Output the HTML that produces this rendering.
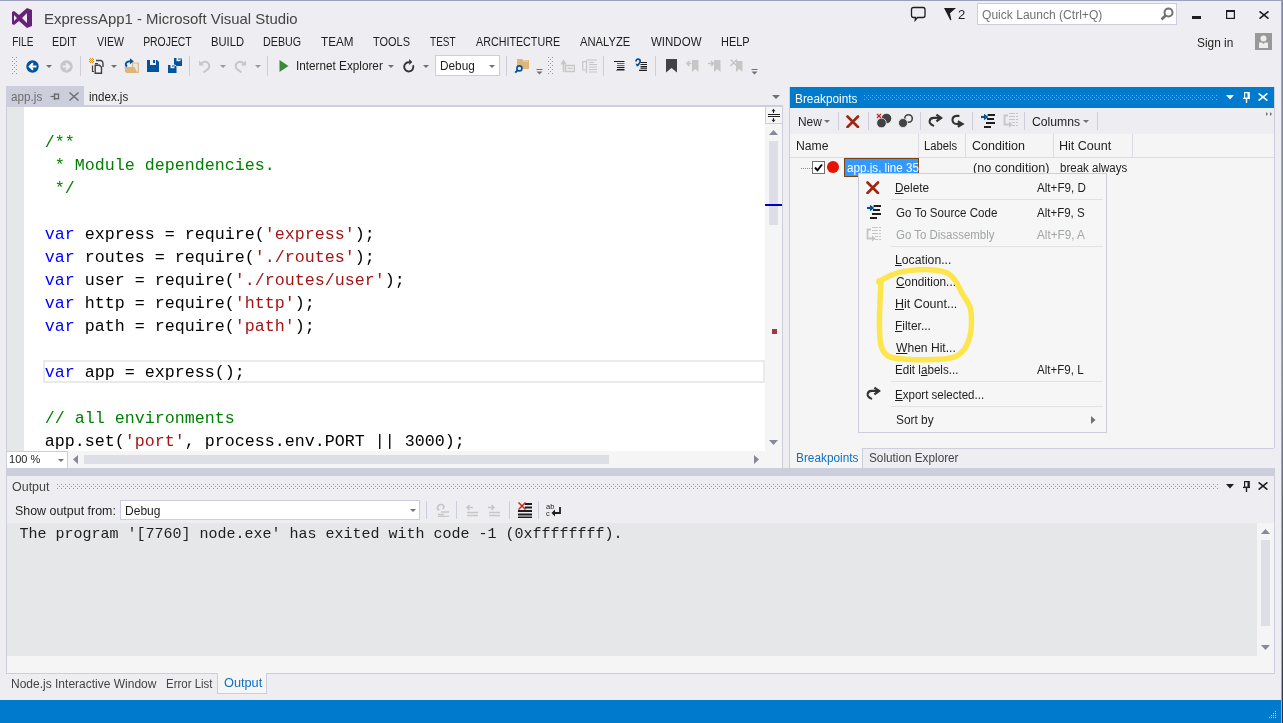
<!DOCTYPE html><html><head><meta charset="utf-8"><style>
*{margin:0;padding:0}
html,body{width:1283px;height:723px;overflow:hidden;background:#EEEEF2;}
.a{position:absolute;white-space:pre;}
.root{position:absolute;left:0;top:0;width:1283px;height:723px;overflow:hidden;will-change:transform;background:#EEEEF2}
.code .k{color:#0000FF} .code .s{color:#A31515} .code .c{color:#008000}
u{text-decoration:underline;text-underline-offset:1px}
</style></head><body><div class="root"><div class="a" style="left:0px;top:0px;width:1283px;height:1px;background:#9EA1BE;"></div>
<div class="a" style="left:1281px;top:0px;width:1px;height:723px;background:#A0A6C2;"></div>
<div class="a" style="left:1282px;top:0px;width:1px;height:723px;background:linear-gradient(#7B8BAA,#888E99 50%,#2A2F45);"></div>
<svg class="a" style="left:12px;top:8px;" width="21" height="20" viewBox="0 0 21 20"><path d="M15 0 L20 2 V18 L15 20 L7 13 L2 17 L0 16 V4 L2 3 L7 7 Z M15 5 L10 10 L15 15 Z M2 7 V13 L5 10 Z" fill="#68217A" fill-rule="evenodd"/></svg>
<div class="a" style="left:43.77px;top:8.80px;font:15px/20px 'Liberation Sans', sans-serif;color:#444444;transform:scaleX(0.9951);transform-origin:1.23px 0;">ExpressApp1 - Microsoft Visual Studio</div>
<svg class="a" style="left:910px;top:6px;" width="17" height="16" viewBox="0 0 17 16"><path d="M3.5 1.5 H13 Q15 1.5 15 3.5 V9.5 Q15 11.5 13 11.5 H7.5 L5.2 14.2 L5.5 11.5 H3.5 Q1.5 11.5 1.5 9.5 V3.5 Q1.5 1.5 3.5 1.5 Z" fill="none" stroke="#1E1E1E" stroke-width="1.3"/></svg>
<svg class="a" style="left:944px;top:7px;" width="13" height="14" viewBox="0 0 13 14"><path d="M0 1 H12 L6 6.3 L7.4 13 L6.3 13.2 Z" fill="#1E1E1E"/></svg>
<div class="a" style="left:958.00px;top:6.84px;font:12px/16px 'Liberation Sans', sans-serif;color:#1E1E1E;transform:scaleX(1.0975);transform-origin:0.60px 0;">2</div>
<div class="a" style="left:977px;top:3px;width:200px;height:22px;background:#FFFFFF;box-sizing:border-box;border:1px solid #CCCEDB;"></div>
<div class="a" style="left:982.43px;top:6.84px;font:12px/16px 'Liberation Sans', sans-serif;color:#717171;transform:scaleX(1.0051);transform-origin:0.57px 0;">Quick Launch (Ctrl+Q)</div>
<svg class="a" style="left:1160px;top:7px;" width="14" height="14" viewBox="0 0 14 14"><circle cx="8.5" cy="5.5" r="4" fill="none" stroke="#717171" stroke-width="2"/><path d="M6 8 L1.5 12.5" stroke="#717171" stroke-width="2.6"/></svg>
<div class="a" style="left:1192px;top:16px;width:9px;height:3px;background:#1E1E1E;"></div>
<svg class="a" style="left:1226px;top:10px;" width="9" height="9" viewBox="0 0 9 9"><rect x="0.6" y="0.6" width="7.8" height="7.8" fill="none" stroke="#1E1E1E" stroke-width="1.2"/><rect x="0" y="0" width="9" height="2" fill="#1E1E1E"/></svg>
<svg class="a" style="left:1259px;top:11px;" width="10" height="8" viewBox="0 0 10 8"><path d="M0.5 0.3 L9.5 7.7 M9.5 0.3 L0.5 7.7" stroke="#1E1E1E" stroke-width="1.5"/></svg>
<div class="a" style="left:1196.96px;top:34.84px;font:12px/16px 'Liberation Sans', sans-serif;color:#1E1E1E;transform:scaleX(0.9896);transform-origin:0.54px 0;">Sign in</div>
<svg class="a" style="left:1255px;top:33px;" width="17" height="17" viewBox="0 0 17 17"><rect width="17" height="17" fill="#999999"/><circle cx="8.5" cy="5.5" r="3" fill="#EEEEF2"/><path d="M4 9.5 H7 L8.5 11 L10 9.5 H13 V15 H4 Z" fill="#EEEEF2"/></svg>
<div class="a" style="left:11.92px;top:33.84px;font:12px/16px 'Liberation Sans', sans-serif;color:#1E1E1E;transform:scaleX(0.8389);transform-origin:0.98px 0;">FILE</div>
<div class="a" style="left:51.92px;top:33.84px;font:12px/16px 'Liberation Sans', sans-serif;color:#1E1E1E;transform:scaleX(0.8974);transform-origin:0.98px 0;">EDIT</div>
<div class="a" style="left:96.85px;top:33.84px;font:12px/16px 'Liberation Sans', sans-serif;color:#1E1E1E;transform:scaleX(0.8766);transform-origin:0.05px 0;">VIEW</div>
<div class="a" style="left:143.02px;top:33.84px;font:12px/16px 'Liberation Sans', sans-serif;color:#1E1E1E;transform:scaleX(0.8677);transform-origin:0.98px 0;">PROJECT</div>
<div class="a" style="left:211.02px;top:33.84px;font:12px/16px 'Liberation Sans', sans-serif;color:#1E1E1E;transform:scaleX(0.9324);transform-origin:0.98px 0;">BUILD</div>
<div class="a" style="left:263.32px;top:33.84px;font:12px/16px 'Liberation Sans', sans-serif;color:#1E1E1E;transform:scaleX(0.8923);transform-origin:0.98px 0;">DEBUG</div>
<div class="a" style="left:321.23px;top:33.84px;font:12px/16px 'Liberation Sans', sans-serif;color:#1E1E1E;transform:scaleX(0.9726);transform-origin:0.27px 0;">TEAM</div>
<div class="a" style="left:373.13px;top:33.84px;font:12px/16px 'Liberation Sans', sans-serif;color:#1E1E1E;transform:scaleX(0.9133);transform-origin:0.27px 0;">TOOLS</div>
<div class="a" style="left:430.03px;top:33.84px;font:12px/16px 'Liberation Sans', sans-serif;color:#1E1E1E;transform:scaleX(0.8299);transform-origin:0.27px 0;">TEST</div>
<div class="a" style="left:475.98px;top:33.84px;font:12px/16px 'Liberation Sans', sans-serif;color:#1E1E1E;transform:scaleX(0.8945);transform-origin:0.02px 0;">ARCHITECTURE</div>
<div class="a" style="left:580.18px;top:33.84px;font:12px/16px 'Liberation Sans', sans-serif;color:#1E1E1E;transform:scaleX(0.9345);transform-origin:0.02px 0;">ANALYZE</div>
<div class="a" style="left:651.15px;top:33.84px;font:12px/16px 'Liberation Sans', sans-serif;color:#1E1E1E;transform:scaleX(0.9589);transform-origin:0.05px 0;">WINDOW</div>
<div class="a" style="left:721.42px;top:33.84px;font:12px/16px 'Liberation Sans', sans-serif;color:#1E1E1E;transform:scaleX(0.9115);transform-origin:0.98px 0;">HELP</div>
<svg class="a" style="left:12px;top:57px;" width="5" height="17" viewBox="0 0 5 17"><defs><pattern id="g1" width="4" height="4" patternUnits="userSpaceOnUse"><rect x="0" y="0" width="1" height="1" fill="#999999"/><rect x="2" y="2" width="1" height="1" fill="#999999"/></pattern></defs><rect width="5" height="17" fill="url(#g1)"/></svg>
<svg class="a" style="left:26px;top:60px;" width="13" height="13" viewBox="0 0 13 13"><circle cx="6.5" cy="6.5" r="6.2" fill="#00539C"/><path d="M10.5 6.5 H4 M7 3.2 L3.7 6.5 L7 9.8" stroke="#fff" stroke-width="2" fill="none"/></svg>
<svg class="a" style="left:46px;top:65px;" width="6" height="4" viewBox="0 0 6 4"><path d="M0 0 H6 L3.0 3.0 Z" fill="#717171"/></svg>
<svg class="a" style="left:60px;top:60px;" width="13" height="13" viewBox="0 0 13 13"><circle cx="6.5" cy="6.5" r="6.2" fill="#C6C6C6"/><path d="M2.5 6.5 H9 M6 3.2 L9.3 6.5 L6 9.8" stroke="#EEEEF2" stroke-width="2" fill="none"/></svg>
<div class="a" style="left:80px;top:56px;width:1px;height:20px;background:#CCCEDB;"></div>
<svg class="a" style="left:89px;top:58px;" width="16" height="16" viewBox="0 0 16 16"><g fill="#D18A1B"><rect x="1" y="0" width="1" height="1"/><rect x="3" y="0" width="1" height="1"/><rect x="2" y="1" width="1" height="1"/><rect x="1" y="2" width="1" height="1"/><rect x="3" y="2" width="1" height="1"/><rect x="0" y="1" width="1" height="1"/><rect x="4" y="1" width="1" height="1"/><rect x="2" y="3" width="1" height="1"/><rect x="0" y="3" width="1" height="1"/><rect x="4" y="3" width="1" height="1"/><rect x="1" y="4" width="1" height="1"/><rect x="3" y="4" width="1" height="1"/></g><path d="M7 2.5 H12 Q14 3 14 5.5 V9" fill="none" stroke="#424242" stroke-width="1.4"/><rect x="6" y="5" width="3" height="1.3" fill="#424242"/><path d="M6.2 7.2 H10.5 L12.5 9.2 V15.3 H6.2 Z" fill="#F0EFF1" stroke="#424242" stroke-width="1.4"/><path d="M3.5 7.5 V13.5 H5" stroke="#424242" stroke-width="1.2" fill="none"/></svg>
<svg class="a" style="left:111px;top:65px;" width="6" height="4" viewBox="0 0 6 4"><path d="M0 0 H6 L3.0 3.0 Z" fill="#717171"/></svg>
<svg class="a" style="left:124px;top:58px;" width="15" height="16" viewBox="0 0 15 16"><path d="M14.3 5 H8.5 V14.5 H14.3 Z" fill="#E8E8EC" stroke="#DCB67A" stroke-width="1.2"/><path d="M0.5 9 H10.5 L13.5 15 H2 Z" fill="#DCB67A"/><path d="M1.5 7 V14" stroke="#DCB67A" stroke-width="1.2"/><path d="M3 8.5 Q0.8 6.5 2.5 4.5 Q4 3 7 3.2" stroke="#00539C" stroke-width="1.9" fill="none"/><path d="M6 0.2 L9.8 3.2 L6 6.2 Z" fill="#00539C"/></svg>
<svg class="a" style="left:147px;top:60px;" width="13" height="13" viewBox="0 0 13 13"><path d="M0 0 H10 L12 2 V12 H0 Z" fill="#00539C"/><rect x="3" y="0" width="6" height="5" fill="#EEEEF2"/><rect x="6" y="0" width="2" height="3" fill="#00539C"/></svg>
<svg class="a" style="left:167px;top:58px;" width="16" height="16" viewBox="0 0 16 16"><path d="M7 0 H14 L15 1.5 V8 H7 Z" fill="#00539C"/><rect x="9.5" y="0" width="4" height="3.2" fill="#EEEEF2"/><rect x="11.5" y="0" width="1" height="2" fill="#00539C"/><path d="M1 7 H8.5 L9.5 8.5 V15 H1 Z" fill="#00539C"/><rect x="3.5" y="7" width="4" height="3.2" fill="#EEEEF2"/><rect x="5.5" y="7" width="1" height="2" fill="#00539C"/><path d="M7.5 6.5 L9.5 8.5" stroke="#EEEEF2" stroke-width="1"/></svg>
<div class="a" style="left:189px;top:56px;width:1px;height:20px;background:#CCCEDB;"></div>
<svg class="a" style="left:198px;top:59px;" width="14" height="14" viewBox="0 0 14 14"><path d="M1 1.5 L1 6.5 L6 6.5 Z" fill="#C6C6C6"/><path d="M2.5 5 Q6 1.5 9.5 3.5 Q12.5 6 10.5 9.5 L5.5 13.5" fill="none" stroke="#C6C6C6" stroke-width="2"/></svg>
<svg class="a" style="left:220px;top:65px;" width="6" height="4" viewBox="0 0 6 4"><path d="M0 0 H6 L3.0 3.0 Z" fill="#999999"/></svg>
<svg class="a" style="left:233px;top:59px;" width="14" height="14" viewBox="0 0 14 14"><path d="M13 1.5 L13 6.5 L8 6.5 Z" fill="#C6C6C6"/><path d="M11.5 5 Q8 1.5 4.5 3.5 Q1.5 6 3.5 9.5 L8.5 13.5" fill="none" stroke="#C6C6C6" stroke-width="2"/></svg>
<svg class="a" style="left:255px;top:65px;" width="6" height="4" viewBox="0 0 6 4"><path d="M0 0 H6 L3.0 3.0 Z" fill="#999999"/></svg>
<div class="a" style="left:267px;top:56px;width:1px;height:20px;background:#CCCEDB;"></div>
<svg class="a" style="left:279px;top:60px;" width="10" height="12" viewBox="0 0 10 12"><path d="M0.5 0 L9.5 6 L0.5 12 Z" fill="#388A34"/></svg>
<div class="a" style="left:296.39px;top:57.84px;font:12px/16px 'Liberation Sans', sans-serif;color:#1E1E1E;transform:scaleX(0.9782);transform-origin:1.11px 0;">Internet Explorer</div>
<svg class="a" style="left:388px;top:65px;" width="6" height="4" viewBox="0 0 6 4"><path d="M0 0 H6 L3.0 3.0 Z" fill="#717171"/></svg>
<svg class="a" style="left:402px;top:59px;" width="14" height="14" viewBox="0 0 14 14"><path d="M7.6 3.3 A4.6 4.6 0 1 0 11.1 6.3" fill="none" stroke="#333333" stroke-width="1.9"/><path d="M7.2 0 L10.3 2.9 L7.2 5.9 Z" fill="#333333"/></svg>
<svg class="a" style="left:423px;top:65px;" width="6" height="4" viewBox="0 0 6 4"><path d="M0 0 H6 L3.0 3.0 Z" fill="#717171"/></svg>
<div class="a" style="left:435px;top:55px;width:65px;height:21px;background:#FFFFFF;box-sizing:border-box;border:1px solid #CCCEDB;"></div>
<div class="a" style="left:439.52px;top:57.84px;font:12px/16px 'Liberation Sans', sans-serif;color:#1E1E1E;transform:scaleX(0.9820);transform-origin:0.98px 0;">Debug</div>
<svg class="a" style="left:489px;top:65px;" width="6" height="4" viewBox="0 0 6 4"><path d="M0 0 H6 L3.0 3.0 Z" fill="#717171"/></svg>
<div class="a" style="left:506px;top:56px;width:1px;height:20px;background:#CCCEDB;"></div>
<svg class="a" style="left:514px;top:58px;" width="16" height="16" viewBox="0 0 16 16"><path d="M3 1 H8 L9 2 H15 V11 H3 Z" fill="#DCB67A"/><rect x="9" y="2.5" width="5" height="1" fill="#F0DDB8"/><circle cx="5.4" cy="10.4" r="2.5" fill="#EEEEF2" stroke="#00539C" stroke-width="1.6"/><path d="M3.7 12.1 L1.2 14.6" stroke="#00539C" stroke-width="2"/></svg>
<svg class="a" style="left:536px;top:69px;" width="7" height="7" viewBox="0 0 7 7"><rect x="0.5" y="0" width="6" height="1" fill="#717171"/><path d="M0.5 2.5 H6.5 L3.5 5.5 Z" fill="#717171"/></svg>
<svg class="a" style="left:548px;top:57px;" width="5" height="17" viewBox="0 0 5 17"><defs><pattern id="g2" width="4" height="4" patternUnits="userSpaceOnUse"><rect x="0" y="0" width="1" height="1" fill="#999999"/><rect x="2" y="2" width="1" height="1" fill="#999999"/></pattern></defs><rect width="5" height="17" fill="url(#g2)"/></svg>
<svg class="a" style="left:561px;top:59px;" width="14" height="14" viewBox="0 0 14 14"><path d="M2.5 13 V3 M0.3 5.5 L2.5 2 L4.7 5.5" stroke="#C6C6C6" stroke-width="1.5" fill="none"/><rect x="4.5" y="6.5" width="9" height="6" fill="none" stroke="#C6C6C6" stroke-width="1.5"/><rect x="6.5" y="8.8" width="5" height="1.2" fill="#C6C6C6"/></svg>
<svg class="a" style="left:582px;top:59px;" width="16" height="14" viewBox="0 0 16 14"><path d="M4 2.5 H0.8 V11 H4" stroke="#C6C6C6" stroke-width="1.2" fill="none"/><path d="M4.5 1 V14" stroke="#C6C6C6" stroke-width="1.2"/><path d="M5 1 H15 M7 3.5 H12 M7 5.5 H15 M7 8 H15 M7 10.5 H15 M7 13 H15" stroke="#C6C6C6" stroke-width="1.1"/></svg>
<div class="a" style="left:603px;top:56px;width:1px;height:20px;background:#CCCEDB;"></div>
<svg class="a" style="left:613px;top:60px;" width="12" height="11" viewBox="0 0 12 11"><path d="M1 1.5 H11.5 M4 9.5 H11.5 M3 11 H11.5" stroke="#1E1E1E" stroke-width="1.2"/><path d="M4 3.5 H11.5 M4 5.5 H11.5" stroke="#388A34" stroke-width="1.2"/><path d="M4 7.5 H11.5" stroke="#1E1E1E" stroke-width="1.2"/></svg>
<svg class="a" style="left:634px;top:58px;" width="15" height="14" viewBox="0 0 15 14"><path d="M2 3.5 Q2 1.2 4 1.2 Q6.2 1.2 6.2 3.3 Q6.2 5 3.5 7.5" fill="none" stroke="#00539C" stroke-width="1.7"/><path d="M1.5 5.5 L3 8.8 L5.8 6.5 Z" fill="#00539C"/><path d="M6.5 4.5 H13 M6.5 6.5 H13 M6.5 8.5 H13 M6.5 10.2 H13 M5 12.3 H13" stroke="#1E1E1E" stroke-width="1.2"/></svg>
<div class="a" style="left:655px;top:56px;width:1px;height:20px;background:#CCCEDB;"></div>
<svg class="a" style="left:666px;top:59px;" width="11" height="14" viewBox="0 0 11 14"><path d="M0 0 H11 V13.5 L5.5 9 L0 13.5 Z" fill="#424242"/></svg>
<svg class="a" style="left:686px;top:59px;" width="14" height="14" viewBox="0 0 14 14"><path d="M6 1 H12.5 V13 L9.25 10 L6 13 Z" fill="#C6C6C6"/><path d="M5.5 4.5 H1 M3.5 2 L1 4.5 L3.5 7" stroke="#C6C6C6" stroke-width="1.6" fill="none"/></svg>
<svg class="a" style="left:708px;top:59px;" width="14" height="14" viewBox="0 0 14 14"><path d="M6 1 H12.5 V13 L9.25 10 L6 13 Z" fill="#C6C6C6"/><path d="M0 4.5 H5 M3 2 L5.5 4.5 L3 7" stroke="#C6C6C6" stroke-width="1.6" fill="none"/></svg>
<svg class="a" style="left:730px;top:59px;" width="14" height="14" viewBox="0 0 14 14"><path d="M6 2 H12.5 V13 L9.25 10 L6 13 Z" fill="#C6C6C6"/><path d="M0.5 0.5 L7 7 M7 0.5 L0.5 7" stroke="#C6C6C6" stroke-width="1.5"/></svg>
<svg class="a" style="left:751px;top:69px;" width="7" height="7" viewBox="0 0 7 7"><rect x="0.5" y="0" width="6" height="1" fill="#717171"/><path d="M0.5 2.5 H6.5 L3.5 5.5 Z" fill="#717171"/></svg>
<div class="a" style="left:6px;top:86px;width:78px;height:21px;background:#CCCEDB;"></div>
<div class="a" style="left:11.09px;top:88.84px;font:12px/16px 'Liberation Sans', sans-serif;color:#6D6D6D;transform:scaleX(0.9750);transform-origin:0.51px 0;">app.js</div>
<svg class="a" style="left:50px;top:93px;" width="10" height="8" viewBox="0 0 10 8"><path d="M0.5 3.5 H4" stroke="#6D6D6D" stroke-width="1.2"/><path d="M4.5 0.5 V7" stroke="#6D6D6D" stroke-width="1.2"/><rect x="4.5" y="1.2" width="4" height="4.5" fill="none" stroke="#6D6D6D" stroke-width="1.4"/></svg>
<svg class="a" style="left:69px;top:92px;" width="10" height="9" viewBox="0 0 10 9"><path d="M0.5 0.5 L9.5 8.5 M9.5 0.5 L0.5 8.5" stroke="#6D6D6D" stroke-width="1.4"/></svg>
<div class="a" style="left:88.90px;top:88.84px;font:12px/16px 'Liberation Sans', sans-serif;color:#1E1E1E;transform:scaleX(0.9632);transform-origin:0.80px 0;">index.js</div>
<svg class="a" style="left:772px;top:95px;" width="8" height="5" viewBox="0 0 8 5"><path d="M0 0 H8 L4.0 4.0 Z" fill="#717171"/></svg>
<div class="a" style="left:6px;top:105px;width:777px;height:2px;background:#CCCEDB;"></div>
<div class="a" style="left:6px;top:107px;width:1px;height:361px;background:#CCCEDB;"></div>
<div class="a" style="left:7px;top:107px;width:17px;height:344px;background:#E6E7E8;"></div>
<div class="a" style="left:24px;top:107px;width:741px;height:344px;background:#FFFFFF;"></div>
<div class="a" style="left:782px;top:107px;width:1px;height:361px;background:#CCCEDB;"></div>
<div class="a" style="left:765px;top:107px;width:17px;height:344px;background:#F5F5F5;"></div>
<div class="a" style="left:765px;top:107px;width:17px;height:17px;background:#F5F5F5;box-sizing:border-box;border-left:1px solid #CCCEDB;border-bottom:1px solid #CCCEDB;"></div>
<svg class="a" style="left:768px;top:108px;" width="12" height="15" viewBox="0 0 12 15"><path d="M0 6.5 H12 M0 8.5 H12" stroke="#1E1E1E" stroke-width="1"/><path d="M5.5 2.5 V5 M5.5 10 V12.5" stroke="#1E1E1E" stroke-width="1"/><path d="M3.5 3.2 L5.5 0.8 L7.5 3.2 Z M3.5 11.8 L5.5 14.2 L7.5 11.8 Z" fill="#1E1E1E"/></svg>
<svg class="a" style="left:769px;top:130px;" width="9" height="5" viewBox="0 0 9 5"><path d="M0 5 L4.5 0 L9 5 Z" fill="#868999"/></svg>
<div class="a" style="left:769px;top:141px;width:9px;height:84px;background:#DDDEE6;"></div>
<div class="a" style="left:765px;top:204px;width:17px;height:2px;background:#0000CD;"></div>
<div class="a" style="left:772px;top:329px;width:5px;height:5px;background:#9F3A43;"></div>
<svg class="a" style="left:769px;top:440px;" width="9" height="5" viewBox="0 0 9 5"><path d="M0 0 L4.5 5 L9 0 Z" fill="#868999"/></svg>
<div class="a" style="left:7px;top:451px;width:775px;height:17px;background:#F5F5F5;"></div>
<div class="a" style="left:7px;top:451px;width:61px;height:17px;background:#FFFFFF;box-sizing:border-box;border-top:1px solid #CCCEDB;border-right:1px solid #CCCEDB;"></div>
<div class="a" style="left:9.12px;top:451.52px;font:11.5px/15px 'Liberation Sans', sans-serif;color:#1E1E1E;transform:scaleX(0.9578);transform-origin:0.88px 0;">100 %</div>
<svg class="a" style="left:58px;top:459px;" width="6" height="4" viewBox="0 0 6 4"><path d="M0 0 H6 L3.0 3.0 Z" fill="#717171"/></svg>
<svg class="a" style="left:73px;top:455px;" width="5" height="9" viewBox="0 0 5 9"><path d="M5 0 L0 4.5 L5 9 Z" fill="#868999"/></svg>
<div class="a" style="left:84px;top:455px;width:525px;height:9px;background:#DDDEE6;"></div>
<svg class="a" style="left:754px;top:455px;" width="5" height="9" viewBox="0 0 5 9"><path d="M0 0 L5 4.5 L0 9 Z" fill="#868999"/></svg>
<div class="a" style="left:43px;top:360px;width:722px;height:23px;background:transparent;box-sizing:border-box;border:2px solid #EAEAEA;"></div>
<div class="a code" style="left:44.8px;top:131px;width:720px;font:16.67px/23px 'Liberation Mono', monospace;color:#000;white-space:pre;overflow:hidden;height:320px"><span class="c">/**</span>
<span class="c"> * Module dependencies.</span>
<span class="c"> */</span>

<span class="k">var</span> express = require(<span class="s">&#x27;express&#x27;</span>);
<span class="k">var</span> routes = require(<span class="s">&#x27;./routes&#x27;</span>);
<span class="k">var</span> user = require(<span class="s">&#x27;./routes/user&#x27;</span>);
<span class="k">var</span> http = require(<span class="s">&#x27;http&#x27;</span>);
<span class="k">var</span> path = require(<span class="s">&#x27;path&#x27;</span>);

<span class="k">var</span> app = express();

<span class="c">// all environments</span>
app.set(<span class="s">&#x27;port&#x27;</span>, process.env.PORT || 3000);</div>
<div class="a" style="left:789px;top:87px;width:1px;height:381px;background:#CCCEDB;"></div>
<div class="a" style="left:1274px;top:87px;width:1px;height:361px;background:#CCCEDB;"></div>
<div class="a" style="left:790px;top:87px;width:484px;height:21px;background:#007ACC;"></div>
<div class="a" style="left:794.72px;top:90.84px;font:12px/16px 'Liberation Sans', sans-serif;color:#FFFFFF;transform:scaleX(0.9846);transform-origin:0.98px 0;">Breakpoints</div>
<svg class="a" style="left:864px;top:95px;" width="354" height="5" viewBox="0 0 354 5"><defs><pattern id="g3" width="4" height="4" patternUnits="userSpaceOnUse"><rect x="0" y="0" width="1" height="1" fill="#6DB3E6"/><rect x="2" y="2" width="1" height="1" fill="#6DB3E6"/></pattern></defs><rect width="354" height="5" fill="url(#g3)"/></svg>
<svg class="a" style="left:1226px;top:95px;" width="8" height="5" viewBox="0 0 8 5"><path d="M0 0 H8 L4 4.5 Z" fill="#FFFFFF"/></svg>
<svg class="a" style="left:1242px;top:90px;" width="9" height="14" viewBox="0 0 9 14"><path d="M4.5 8.5 V13" stroke="#FFFFFF" stroke-width="1.4"/><path d="M2.6 2.6 H7 V8.3 H2.6 Z" fill="none" stroke="#FFFFFF" stroke-width="1.2"/><rect x="5.5" y="2" width="2" height="6.3" fill="#FFFFFF"/><path d="M1 8.4 H8" stroke="#FFFFFF" stroke-width="1.3"/></svg>
<svg class="a" style="left:1258px;top:93px;" width="10" height="8" viewBox="0 0 10 8"><path d="M0.6 0.4 L9.4 7.6 M9.4 0.4 L0.6 7.6" stroke="#FFFFFF" stroke-width="1.6"/></svg>
<div class="a" style="left:790px;top:108px;width:484px;height:26px;background:#EEEEF2;"></div>
<div class="a" style="left:797.72px;top:113.84px;font:12px/16px 'Liberation Sans', sans-serif;color:#1E1E1E;transform:scaleX(0.9935);transform-origin:0.98px 0;">New</div>
<svg class="a" style="left:824px;top:120px;" width="6" height="4" viewBox="0 0 6 4"><path d="M0 0 H6 L3.0 3.0 Z" fill="#717171"/></svg>
<div class="a" style="left:838px;top:112px;width:1px;height:18px;background:#CCCEDB;"></div>
<svg class="a" style="left:846px;top:115px;" width="14" height="13" viewBox="0 0 14 13"><path d="M1.5 1.5 L12 12 M12 1.5 L1.5 12" stroke="#A1260D" stroke-width="2.6" stroke-linecap="round"/></svg>
<div class="a" style="left:868px;top:112px;width:1px;height:18px;background:#CCCEDB;"></div>
<svg class="a" style="left:876px;top:113px;" width="16" height="15" viewBox="0 0 16 15"><circle cx="10.5" cy="5.5" r="4.8" fill="#424242"/><circle cx="5.5" cy="10" r="4.8" fill="#424242" stroke="#EEEEF2" stroke-width="0.8"/><path d="M1 1 L5 5 M5 1 L1 5" stroke="#C5261A" stroke-width="1.3"/></svg>
<svg class="a" style="left:898px;top:113px;" width="16" height="15" viewBox="0 0 16 15"><circle cx="10.5" cy="5.5" r="3.8" fill="none" stroke="#424242" stroke-width="1.6"/><circle cx="5" cy="10" r="4.5" fill="#424242" stroke="#EEEEF2" stroke-width="0.8"/></svg>
<div class="a" style="left:920px;top:112px;width:1px;height:18px;background:#CCCEDB;"></div>
<svg class="a" style="left:924px;top:110px;" width="20" height="20" viewBox="0 0 20 20"><path d="M9.3 15.6 Q5.2 13.8 5.6 11.2 Q6 8 9.5 7.9 H17" stroke="#333333" stroke-width="2.1" fill="none" stroke-linecap="round"/><path d="M12.4 4.6 L17 7.9 L12.4 11.3" stroke="#333333" stroke-width="2.3" fill="none" stroke-linejoin="miter"/></svg>
<svg class="a" style="left:948px;top:110px;" width="20" height="20" viewBox="0 0 20 20"><path d="M10.6 5.9 H8.5 Q4.5 6.2 4.5 10 Q4.7 13.8 8.5 14 H14" stroke="#333333" stroke-width="2.1" fill="none" stroke-linecap="round"/><path d="M9.8 11.2 L14.4 14 L9.8 16.8" stroke="#333333" stroke-width="2.3" fill="none"/></svg>
<div class="a" style="left:972px;top:112px;width:1px;height:18px;background:#CCCEDB;"></div>
<svg class="a" style="left:980px;top:113px;" width="16" height="16" viewBox="0 0 16 16"><path d="M7.6 2 H15 M7 6 H14 M6 10 H15 M4 14 H11" stroke="#1E1E1E" stroke-width="1.8"/><path d="M1 4 H6" stroke="#00539C" stroke-width="2.2"/><path d="M4 0.8 L8.4 4 L4 7.2 Z" fill="#00539C"/></svg>
<svg class="a" style="left:1003px;top:113px;" width="15" height="16" viewBox="0 0 15 16"><path d="M6 0.5 H12 M13 0.5 H15 M6 3.5 H12 M13 3.5 H15 M6 6.5 H12 M13 6.5 H15 M9 9.5 H12 M13 9.5 H15 M9 12.5 H12 M13 12.5 H15" stroke="#C6C6C6" stroke-width="1"/><path d="M5 2.5 H1.5 V11.5 H7" stroke="#C6C6C6" stroke-width="1.8" fill="none"/><path d="M6 8.3 L9.5 11.5 L6 14.7 Z" fill="#C6C6C6"/></svg>
<div class="a" style="left:1024px;top:112px;width:1px;height:18px;background:#CCCEDB;"></div>
<div class="a" style="left:1032.39px;top:113.84px;font:12px/16px 'Liberation Sans', sans-serif;color:#1E1E1E;transform:scaleX(1.0171);transform-origin:0.61px 0;">Columns</div>
<svg class="a" style="left:1083px;top:120px;" width="6" height="4" viewBox="0 0 6 4"><path d="M0 0 H6 L3.0 3.0 Z" fill="#717171"/></svg>
<div class="a" style="left:1097px;top:112px;width:1px;height:18px;background:#CCCEDB;"></div>
<svg class="a" style="left:1266px;top:112px;" width="6" height="4" viewBox="0 0 6 4"><path d="M0 0 L2 2 L0 4 Z M4 0 L6 2 L4 4 Z" fill="#717171"/></svg>
<div class="a" style="left:790px;top:134px;width:484px;height:314px;background:#F5F5F5;"></div>
<div class="a" style="left:790px;top:157px;width:484px;height:1px;background:#DADBE3;"></div>
<div class="a" style="left:918px;top:134px;width:1px;height:23px;background:#DADBE3;"></div>
<div class="a" style="left:965px;top:134px;width:1px;height:23px;background:#DADBE3;"></div>
<div class="a" style="left:1053px;top:134px;width:1px;height:23px;background:#DADBE3;"></div>
<div class="a" style="left:1132px;top:134px;width:1px;height:23px;background:#DADBE3;"></div>
<div class="a" style="left:795.82px;top:137.84px;font:12px/16px 'Liberation Sans', sans-serif;color:#1E1E1E;transform:scaleX(1.0167);transform-origin:0.98px 0;">Name</div>
<div class="a" style="left:924.42px;top:137.84px;font:12px/16px 'Liberation Sans', sans-serif;color:#1E1E1E;transform:scaleX(0.9369);transform-origin:0.98px 0;">Labels</div>
<div class="a" style="left:972.29px;top:137.84px;font:12px/16px 'Liberation Sans', sans-serif;color:#1E1E1E;transform:scaleX(1.0444);transform-origin:0.61px 0;">Condition</div>
<div class="a" style="left:1059.02px;top:137.84px;font:12px/16px 'Liberation Sans', sans-serif;color:#1E1E1E;transform:scaleX(1.0460);transform-origin:0.98px 0;">Hit Count</div>
<svg class="a" style="left:801px;top:168px;" width="11" height="1" viewBox="0 0 11 1"><rect x="0" y="0" width="1" height="1" fill="#8A8A8A"/><rect x="2" y="0" width="1" height="1" fill="#8A8A8A"/><rect x="4" y="0" width="1" height="1" fill="#8A8A8A"/><rect x="6" y="0" width="1" height="1" fill="#8A8A8A"/><rect x="8" y="0" width="1" height="1" fill="#8A8A8A"/><rect x="10" y="0" width="1" height="1" fill="#8A8A8A"/></svg>
<div class="a" style="left:812px;top:161px;width:13px;height:13px;background:#FFFFFF;box-sizing:border-box;border:1px solid #707070;"></div>
<svg class="a" style="left:814px;top:163px;" width="9" height="9" viewBox="0 0 9 9"><path d="M1 4.5 L3.5 7.3 L8 1.5" stroke="#000" stroke-width="1.9" fill="none"/></svg>
<svg class="a" style="left:827px;top:161px;" width="12" height="12" viewBox="0 0 12 12"><circle cx="6" cy="6" r="6" fill="#E51400"/></svg>
<svg class="a" style="left:844px;top:158px;" width="75" height="19" viewBox="0 0 75 19"><rect x="0" y="0" width="75" height="19" fill="#3399FF"/><rect x="0.5" y="0.5" width="74" height="18" fill="none" stroke="#F08A24" stroke-width="1"/><rect x="0.5" y="0.5" width="74" height="18" fill="none" stroke="#000" stroke-width="1" stroke-dasharray="1 1"/></svg>
<div class="a" style="left:846.99px;top:159.84px;font:12px/16px 'Liberation Sans', sans-serif;color:#FFFFFF;transform:scaleX(0.9721);transform-origin:0.51px 0;">app.js, line 35</div>
<div class="a" style="left:972.76px;top:159.84px;font:12px/16px 'Liberation Sans', sans-serif;color:#1E1E1E;transform:scaleX(1.0517);transform-origin:0.74px 0;">(no condition)</div>
<div class="a" style="left:1060.23px;top:159.84px;font:12px/16px 'Liberation Sans', sans-serif;color:#1E1E1E;transform:scaleX(0.9590);transform-origin:0.77px 0;">break always</div>
<div class="a" style="left:790px;top:448px;width:72px;height:21px;background:#F5F5F5;"></div>
<div class="a" style="left:862px;top:448px;width:412px;height:20px;background:#EEEEF2;box-sizing:border-box;border-top:1px solid #CCCEDB;"></div>
<div class="a" style="left:862px;top:448px;width:1px;height:21px;background:#CCCEDB;"></div>
<div class="a" style="left:795.72px;top:449.84px;font:12px/16px 'Liberation Sans', sans-serif;color:#0E70C0;transform:scaleX(0.9846);transform-origin:0.98px 0;">Breakpoints</div>
<div class="a" style="left:868.66px;top:449.84px;font:12px/16px 'Liberation Sans', sans-serif;color:#444444;transform:scaleX(0.9797);transform-origin:0.54px 0;">Solution Explorer</div>
<div class="a" style="left:858px;top:173px;width:249px;height:260px;background:#F6F6F6;box-sizing:border-box;border:1px solid #CCCEDB;"></div>
<div class="a" style="left:895.42px;top:179.84px;font:12px/16px 'Liberation Sans', sans-serif;color:#1E1E1E;transform:scaleX(0.9828);transform-origin:0.98px 0;"><u>D</u>elete</div>
<div class="a" style="left:1037.08px;top:179.84px;font:12px/16px 'Liberation Sans', sans-serif;color:#1E1E1E;transform:scaleX(0.9708);transform-origin:0.02px 0;">Alt+F9, D</div>
<svg class="a" style="left:866px;top:181px;" width="14" height="13" viewBox="0 0 14 13"><path d="M1.5 1.5 L12 12 M12 1.5 L1.5 12" stroke="#A1260D" stroke-width="2.6" stroke-linecap="round"/></svg>
<div class="a" style="left:891px;top:199px;width:212px;height:1px;background:#E0E3E6;"></div>
<div class="a" style="left:895.80px;top:204.84px;font:12px/16px 'Liberation Sans', sans-serif;color:#1E1E1E;transform:scaleX(0.9632);transform-origin:0.60px 0;">Go To Source Code</div>
<div class="a" style="left:1037.08px;top:204.84px;font:12px/16px 'Liberation Sans', sans-serif;color:#1E1E1E;transform:scaleX(0.9590);transform-origin:0.02px 0;">Alt+F9, S</div>
<svg class="a" style="left:866px;top:204px;" width="16" height="16" viewBox="0 0 16 16"><path d="M7.6 2 H15 M7 6 H14 M6 10 H15 M4 14 H11" stroke="#1E1E1E" stroke-width="1.8"/><path d="M1 4 H6" stroke="#00539C" stroke-width="2.2"/><path d="M4 0.8 L8.4 4 L4 7.2 Z" fill="#00539C"/></svg>
<div class="a" style="left:895.80px;top:226.84px;font:12px/16px 'Liberation Sans', sans-serif;color:#A2A4A5;transform:scaleX(0.9542);transform-origin:0.60px 0;">Go To Disassembly</div>
<div class="a" style="left:1037.08px;top:226.84px;font:12px/16px 'Liberation Sans', sans-serif;color:#A2A4A5;transform:scaleX(0.9770);transform-origin:0.02px 0;">Alt+F9, A</div>
<svg class="a" style="left:866px;top:227px;" width="15" height="16" viewBox="0 0 15 16"><path d="M6 0.5 H12 M13 0.5 H15 M6 3.5 H12 M13 3.5 H15 M6 6.5 H12 M13 6.5 H15 M9 9.5 H12 M13 9.5 H15 M9 12.5 H12 M13 12.5 H15" stroke="#C6C6C6" stroke-width="1"/><path d="M5 2.5 H1.5 V11.5 H7" stroke="#C6C6C6" stroke-width="1.8" fill="none"/><path d="M6 8.3 L9.5 11.5 L6 14.7 Z" fill="#C6C6C6"/></svg>
<div class="a" style="left:891px;top:246px;width:212px;height:1px;background:#E0E3E6;"></div>
<div class="a" style="left:895.42px;top:251.84px;font:12px/16px 'Liberation Sans', sans-serif;color:#1E1E1E;transform:scaleX(1.0189);transform-origin:0.98px 0;"><u>L</u>ocation...</div>
<div class="a" style="left:895.79px;top:273.84px;font:12px/16px 'Liberation Sans', sans-serif;color:#1E1E1E;transform:scaleX(0.9882);transform-origin:0.61px 0;"><u>C</u>ondition...</div>
<div class="a" style="left:895.42px;top:295.84px;font:12px/16px 'Liberation Sans', sans-serif;color:#1E1E1E;transform:scaleX(1.0389);transform-origin:0.98px 0;"><u>H</u>it Count...</div>
<div class="a" style="left:895.42px;top:317.84px;font:12px/16px 'Liberation Sans', sans-serif;color:#1E1E1E;transform:scaleX(0.9946);transform-origin:0.98px 0;"><u>F</u>ilter...</div>
<div class="a" style="left:896.35px;top:339.84px;font:12px/16px 'Liberation Sans', sans-serif;color:#1E1E1E;transform:scaleX(1.0069);transform-origin:0.05px 0;"><u>W</u>hen Hit...</div>
<div class="a" style="left:895.42px;top:361.84px;font:12px/16px 'Liberation Sans', sans-serif;color:#1E1E1E;transform:scaleX(0.9702);transform-origin:0.98px 0;">Edit l<u>a</u>bels...</div>
<div class="a" style="left:1037.08px;top:361.84px;font:12px/16px 'Liberation Sans', sans-serif;color:#1E1E1E;transform:scaleX(0.9638);transform-origin:0.02px 0;">Alt+F9, L</div>
<div class="a" style="left:891px;top:381px;width:212px;height:1px;background:#E0E3E6;"></div>
<div class="a" style="left:895.42px;top:386.84px;font:12px/16px 'Liberation Sans', sans-serif;color:#1E1E1E;transform:scaleX(0.9610);transform-origin:0.98px 0;"><u>E</u>xport selected...</div>
<svg class="a" style="left:862px;top:383px;" width="20" height="20" viewBox="0 0 20 20"><path d="M9.3 15.6 Q5.2 13.8 5.6 11.2 Q6 8 9.5 7.9 H17" stroke="#333333" stroke-width="2.1" fill="none" stroke-linecap="round"/><path d="M12.4 4.6 L17 7.9 L12.4 11.3" stroke="#333333" stroke-width="2.3" fill="none" stroke-linejoin="miter"/></svg>
<div class="a" style="left:891px;top:406px;width:212px;height:1px;background:#E0E3E6;"></div>
<div class="a" style="left:895.86px;top:411.84px;font:12px/16px 'Liberation Sans', sans-serif;color:#1E1E1E;transform:scaleX(0.9907);transform-origin:0.54px 0;">Sort by</div>
<svg class="a" style="left:1091px;top:416px;" width="5" height="8" viewBox="0 0 5 8"><path d="M0 0 L4.5 4 L0 8 Z" fill="#717171"/></svg>
<svg class="a" style="left:860px;top:255px;" width="130" height="120" viewBox="0 0 130 120"><path d="M19.4 26.3 C20.8 25.5 24.4 23.2 27.8 21.7 C31.2 20.2 35.4 18.3 40.0 17.2 C44.6 16.1 49.6 15.3 55.2 14.9 C60.8 14.5 68.1 14.4 73.4 14.9 C78.7 15.4 83.5 16.2 87.1 17.9 C90.6 19.5 92.2 21.4 94.7 24.8 C97.2 28.2 99.8 34.0 102.3 38.5 C104.8 43.0 108.5 47.6 110.0 52.1 C111.5 56.6 111.5 61.0 111.5 65.8 C111.5 70.6 111.3 76.2 110.0 81.0 C108.7 85.8 106.7 91.2 103.9 94.7 C101.1 98.2 98.3 100.7 93.2 102.3 C88.1 103.9 81.8 104.3 73.4 104.6 C65.0 104.9 50.6 104.5 43.0 103.9 C35.4 103.3 31.5 103.1 27.8 100.8 C24.1 98.5 22.4 95.5 21.0 90.2 C19.6 84.9 19.5 76.8 19.4 68.9 C19.3 61.0 19.9 49.9 20.2 43.0 C20.5 36.1 20.9 30.3 21.0 27.8" fill="none" stroke="#FDE64B" stroke-width="5.5" stroke-linecap="round" stroke-linejoin="round"/><circle cx="19.5" cy="26.5" r="3.4" fill="#FDE64B"/></svg>
<div class="a" style="left:6px;top:468px;width:1269px;height:8px;background:#CCCEDB;"></div>
<div class="a" style="left:6px;top:476px;width:1px;height:198px;background:#CCCEDB;"></div>
<div class="a" style="left:1274px;top:476px;width:1px;height:198px;background:#CCCEDB;"></div>
<div class="a" style="left:6px;top:673px;width:1269px;height:1px;background:#CCCEDB;"></div>
<div class="a" style="left:12.13px;top:478.84px;font:12px/16px 'Liberation Sans', sans-serif;color:#444444;transform:scaleX(1.0405);transform-origin:0.57px 0;">Output</div>
<svg class="a" style="left:57px;top:484px;" width="1161" height="5" viewBox="0 0 1161 5"><defs><pattern id="g4" width="4" height="4" patternUnits="userSpaceOnUse"><rect x="0" y="0" width="1" height="1" fill="#999999"/><rect x="2" y="2" width="1" height="1" fill="#999999"/></pattern></defs><rect width="1161" height="5" fill="url(#g4)"/></svg>
<svg class="a" style="left:1226px;top:484px;" width="8" height="5" viewBox="0 0 8 5"><path d="M0 0 H8 L4 4.5 Z" fill="#1E1E1E"/></svg>
<svg class="a" style="left:1242px;top:479px;" width="9" height="14" viewBox="0 0 9 14"><path d="M4.5 8.5 V13" stroke="#1E1E1E" stroke-width="1.4"/><path d="M2.6 2.6 H7 V8.3 H2.6 Z" fill="none" stroke="#1E1E1E" stroke-width="1.2"/><rect x="5.5" y="2" width="2" height="6.3" fill="#1E1E1E"/><path d="M1 8.4 H8" stroke="#1E1E1E" stroke-width="1.3"/></svg>
<svg class="a" style="left:1258px;top:482px;" width="10" height="8" viewBox="0 0 10 8"><path d="M0.6 0.4 L9.4 7.6 M9.4 0.4 L0.6 7.6" stroke="#1E1E1E" stroke-width="1.6"/></svg>
<div class="a" style="left:14.66px;top:502.84px;font:12px/16px 'Liberation Sans', sans-serif;color:#1E1E1E;transform:scaleX(1.0361);transform-origin:0.54px 0;">Show output from:</div>
<div class="a" style="left:120px;top:500px;width:300px;height:20px;background:#FFFFFF;box-sizing:border-box;border:1px solid #CCCEDB;"></div>
<div class="a" style="left:124.62px;top:502.84px;font:12px/16px 'Liberation Sans', sans-serif;color:#1E1E1E;transform:scaleX(1.0029);transform-origin:0.98px 0;">Debug</div>
<svg class="a" style="left:410px;top:509px;" width="6" height="4" viewBox="0 0 6 4"><path d="M0 0 H6 L3.0 3.0 Z" fill="#717171"/></svg>
<div class="a" style="left:426px;top:501px;width:1px;height:18px;background:#CCCEDB;"></div>
<svg class="a" style="left:436px;top:503px;" width="14" height="14" viewBox="0 0 14 14"><path d="M1.5 6 Q1.5 1.5 5 1.5 Q8 1.5 8 4.5 L6.5 6" stroke="#C6C6C6" stroke-width="1.5" fill="none"/><path d="M4 6.5 L0 4.5 L2 8 Z" fill="#C6C6C6"/><path d="M5 9 H13 M2 11.5 H8 M2 13.5 H13" stroke="#C6C6C6" stroke-width="1.5"/></svg>
<div class="a" style="left:456px;top:501px;width:1px;height:18px;background:#CCCEDB;"></div>
<svg class="a" style="left:466px;top:504px;" width="13" height="13" viewBox="0 0 13 13"><path d="M1 3.5 H7 M3.5 1 L1 3.5 L3.5 6" stroke="#C6C6C6" stroke-width="1.4" fill="none"/><path d="M1 8.5 H12 M1 11.5 H12" stroke="#C6C6C6" stroke-width="1.5"/></svg>
<svg class="a" style="left:488px;top:504px;" width="13" height="13" viewBox="0 0 13 13"><path d="M0 3.5 H6 M3.5 1 L6 3.5 L3.5 6" stroke="#C6C6C6" stroke-width="1.4" fill="none"/><path d="M1 8.5 H12 M1 11.5 H12" stroke="#C6C6C6" stroke-width="1.5"/></svg>
<div class="a" style="left:509px;top:501px;width:1px;height:18px;background:#CCCEDB;"></div>
<svg class="a" style="left:518px;top:502px;" width="14" height="16" viewBox="0 0 14 16"><path d="M7 2 H14 M7 5.5 H14 M0 9 H14 M0 12.5 H14 M0 15.5 H14" stroke="#1E1E1E" stroke-width="1.8"/><path d="M0.5 0.5 L7.5 7.5 M7.5 0.5 L0.5 7.5" stroke="#C5261A" stroke-width="1.5"/></svg>
<div class="a" style="left:538px;top:501px;width:1px;height:18px;background:#CCCEDB;"></div>
<svg class="a" style="left:546px;top:503px;" width="16" height="14" viewBox="0 0 16 14"><text x="0" y="6" font-family="Liberation Sans" font-size="7.5" fill="#1E1E1E">ab</text><text x="0" y="12.5" font-family="Liberation Sans" font-size="7.5" fill="#1E1E1E">c</text><path d="M14 4 V10 H8" stroke="#1E1E1E" stroke-width="1.8" fill="none"/><path d="M9 6.5 L5.5 10 L9 13.5 Z" fill="#1E1E1E"/></svg>
<div class="a" style="left:7px;top:523px;width:1250px;height:133px;background:#E6E7E8;"></div>
<div class="a" style="left:1257px;top:523px;width:17px;height:150px;background:#F5F5F5;"></div>
<div class="a" style="left:7px;top:656px;width:1250px;height:17px;background:#F5F5F5;"></div>
<svg class="a" style="left:1261px;top:529px;" width="9" height="5" viewBox="0 0 9 5"><path d="M0 5 L4.5 0 L9 5 Z" fill="#868999"/></svg>
<div class="a" style="left:1261px;top:540px;width:9px;height:86px;background:#DDDEE6;"></div>
<svg class="a" style="left:1261px;top:645px;" width="9" height="5" viewBox="0 0 9 5"><path d="M0 0 L4.5 5 L9 0 Z" fill="#868999"/></svg>
<div class="a" style="left:19.5px;top:525px;font:15px/20px 'Liberation Mono', monospace;color:#1E1E1E;white-space:pre">The program '[7760] node.exe' has exited with code -1 (0xffffffff).</div>
<div class="a" style="left:217px;top:673px;width:50px;height:21px;background:#F5F5F5;box-sizing:border-box;border:1px solid #CCCEDB;border-top:none;"></div>
<div class="a" style="left:11.32px;top:675.84px;font:12px/16px 'Liberation Sans', sans-serif;color:#444444;transform:scaleX(1.0004);transform-origin:0.98px 0;">Node.js Interactive Window</div>
<div class="a" style="left:166.42px;top:675.84px;font:12px/16px 'Liberation Sans', sans-serif;color:#444444;transform:scaleX(0.9538);transform-origin:0.98px 0;">Error List</div>
<div class="a" style="left:223.83px;top:674.84px;font:12px/16px 'Liberation Sans', sans-serif;color:#0E70C0;transform:scaleX(1.0631);transform-origin:0.57px 0;">Output</div>
<div class="a" style="left:0px;top:700px;width:1281px;height:23px;background:#007ACC;"></div>
<svg class="a" style="left:1269px;top:711px;" width="7" height="7" viewBox="0 0 7 7"><rect x="6" y="0" width="1" height="1" fill="#B5D5F0"/><rect x="4" y="2" width="1" height="1" fill="#B5D5F0"/><rect x="6" y="2" width="1" height="1" fill="#B5D5F0"/><rect x="2" y="4" width="1" height="1" fill="#B5D5F0"/><rect x="4" y="4" width="1" height="1" fill="#B5D5F0"/><rect x="6" y="4" width="1" height="1" fill="#B5D5F0"/><rect x="0" y="6" width="1" height="1" fill="#B5D5F0"/><rect x="2" y="6" width="1" height="1" fill="#B5D5F0"/><rect x="4" y="6" width="1" height="1" fill="#B5D5F0"/><rect x="6" y="6" width="1" height="1" fill="#B5D5F0"/></svg></div></body></html>
